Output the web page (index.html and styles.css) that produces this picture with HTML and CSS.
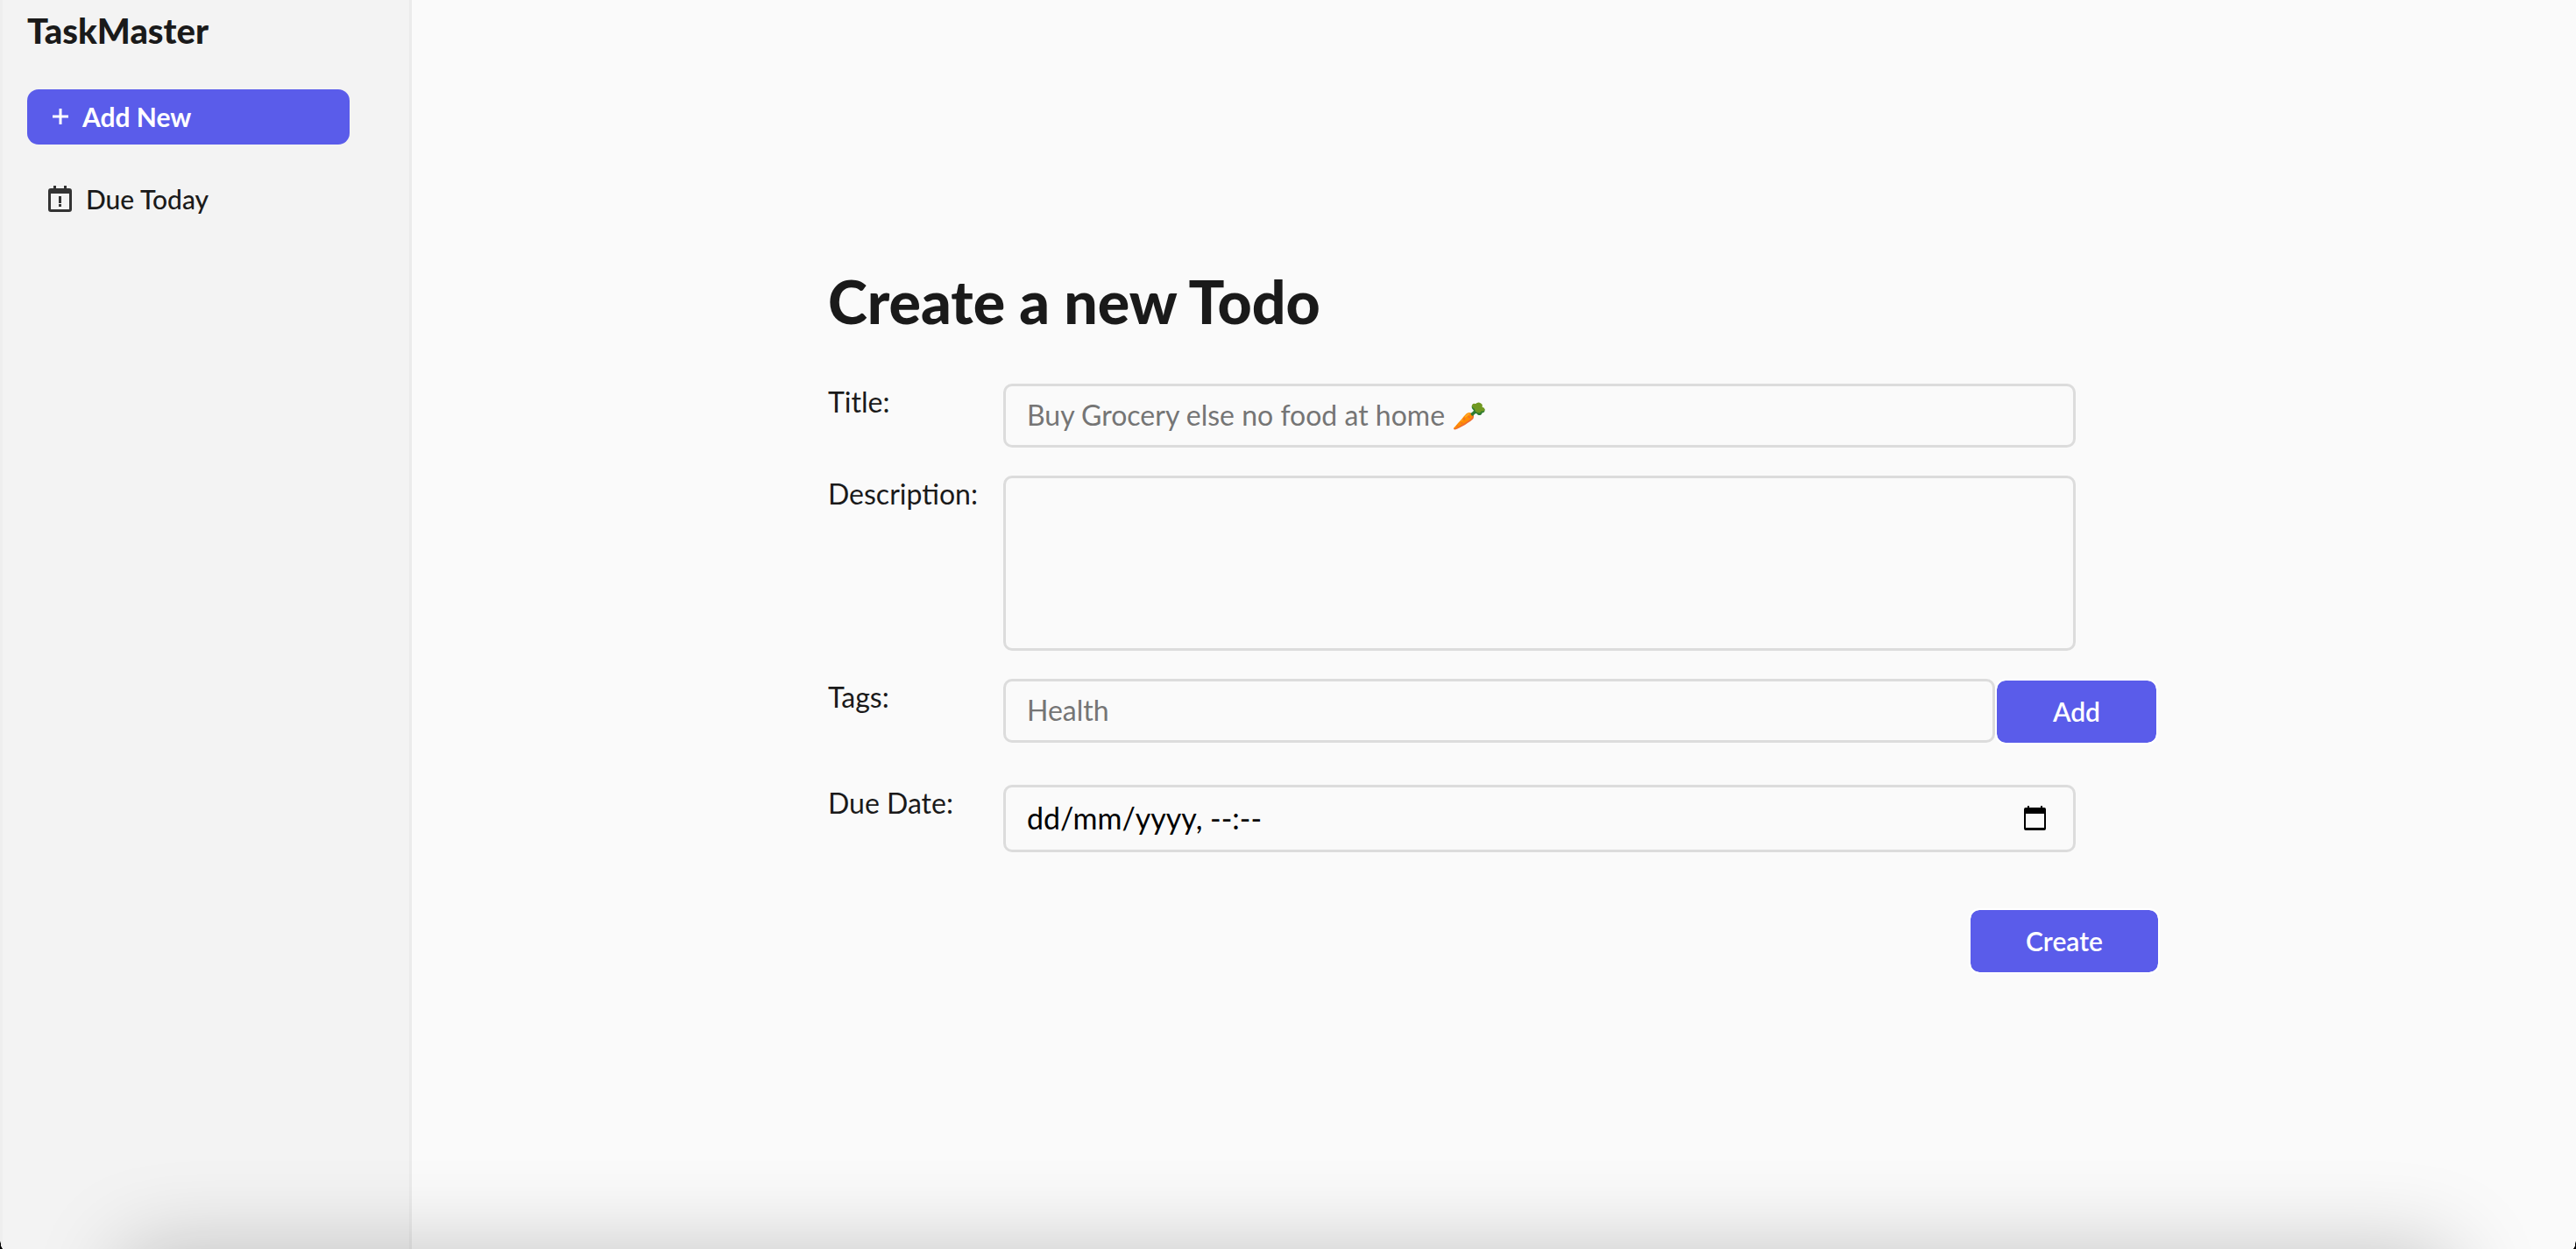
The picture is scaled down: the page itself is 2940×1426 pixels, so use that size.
FILE: index.html
```html
<!DOCTYPE html>
<html lang="en-GB">
<head>
<meta charset="utf-8">
<title>TaskMaster</title>
<link rel="stylesheet" href="styles.css">
</head>
<body>
<div class="app">
  <aside class="sidebar">
    <p class="brand">TaskMaster</p>
    <button class="add-new" type="button">
      <svg class="plus" viewBox="0 0 18 18" aria-hidden="true"><path d="M9 0v18M0 9h18" stroke="currentColor" stroke-width="3"/></svg>
      Add New
    </button>
    <nav>
      <a class="nav-link" href="#today">
        <svg class="nav-icon" viewBox="0 0 27 30" aria-hidden="true">
          <path fill="currentColor" fill-rule="evenodd" d="M6 0h3v3h9V0h3v3h3a3 3 0 0 1 3 3v21a3 3 0 0 1-3 3H3a3 3 0 0 1-3-3V6a3 3 0 0 1 3-3h3zM3 9v18h21V9zM12 12h3v8h-3zM12 21h3v3h-3z"/>
        </svg>
        Due Today
      </a>
    </nav>
  </aside>
  <main class="main">
    <form class="todo-form">
      <h1 class="heading">Create a new Todo</h1>
      <div class="row">
        <label class="label" for="title">Title:</label>
        <div class="field"><input class="input" id="title" type="text" placeholder="Buy Grocery else no food at home 🥕"></div>
      </div>
      <div class="row">
        <label class="label" for="description">Description:</label>
        <div class="field"><textarea class="input textarea" id="description"></textarea></div>
      </div>
      <div class="row row-tags">
        <label class="label" for="tags">Tags:</label>
        <div class="tags"><input class="input" id="tags" type="text" placeholder="Health"><button class="button" type="button">Add</button></div>
      </div>
      <div class="row row-date">
        <label class="label" for="due">Due Date:</label>
        <div class="field">
          <div class="input date">
            <input class="date-input" id="due" type="text" placeholder="dd/mm/yyyy, --:--">
            <button class="picker" type="button" aria-label="Show date picker">
              <svg class="picker-icon" viewBox="0 0 25 28" aria-hidden="true"><path fill="currentColor" fill-rule="evenodd" d="M4 0h2v2h13V0h2v2h2a2 2 0 0 1 2 2v22a2 2 0 0 1-2 2H2a2 2 0 0 1-2-2V4a2 2 0 0 1 2-2h2zM2 9v16h21V9z"/></svg>
            </button>
          </div>
        </div>
      </div>
      <div class="actions"><button class="button button-create" type="submit">Create</button></div>
    </form>
  </main>
</div>
</body>
</html>
```

FILE: styles.css
```css
* {
  box-sizing: border-box;
}

body {
  margin: 0;
  background: #fafafa;
  color: #1a1a1a;
  font-family: Lato, "Noto Sans", sans-serif;
  font-size: 32px;
  line-height: 42px;
}

button,
input,
textarea {
  font: inherit;
}

.app {
  display: flex;
  min-height: 100vh;
}

/* soft shadow rising from the bottom edge of the window */
.app::before {
  content: "";
  position: fixed;
  z-index: 1;
  left: 140px;
  right: 140px;
  top: 100vh;
  height: 200px;
  border-radius: 20px;
  box-shadow: 0 0 100px rgba(0, 0, 0, 0.22);
  pointer-events: none;
}

/* rounded window corners */
.app::after {
  content: "";
  position: fixed;
  z-index: 2;
  inset: auto 0 0;
  height: 14px;
  background:
    radial-gradient(ellipse 100% 100% at 100% 0, transparent 90%, #000) left / 3px 14px no-repeat,
    radial-gradient(ellipse 100% 100% at 0 0, transparent 90%, #000) right / 3px 14px no-repeat;
  pointer-events: none;
}

.sidebar {
  flex: none;
  width: 470px;
  padding: 14px 68px 0 28px;
  border-left: 3px solid #eeeeee;
  border-right: 3px solid #ebebeb;
  background: #f3f3f3;
  font-size: 30px;
  font-weight: 500;
}

.brand {
  margin: 0 0 46px;
  font-size: 40px;
  font-weight: 900;
}

.add-new {
  display: flex;
  align-items: center;
  gap: 16px;
  width: 100%;
  height: 63px;
  padding: 0 29px 2px;
  border: 0;
  border-radius: 13px;
  background: #5a5cea;
  color: #fff;
  font-weight: 700;
}

.plus {
  width: 18px;
  height: 18px;
}

.nav-link {
  display: flex;
  align-items: center;
  gap: 16px;
  margin-top: 41px;
  padding-left: 24px;
  color: inherit;
  text-decoration: none;
}

.nav-icon {
  width: 27px;
  height: 30px;
  color: #333;
}

.main {
  flex: 1;
  display: flex;
  align-items: center;
  justify-content: center;
  padding-bottom: 4px;
}

.todo-form {
  width: 1520px;
  max-width: 100%;
}

.heading {
  margin: 0 0 60px;
  font-size: 68px;
  font-weight: 900;
  line-height: 68px;
}

.row {
  display: grid;
  grid-template-columns: 200px 1fr;
  margin-bottom: 32px;
}

.row-tags {
  margin-bottom: 46px;
}

.row-date {
  margin-bottom: 64px;
}

.field {
  display: flex;
  padding-right: 96px;
}

.input {
  flex: 1;
  min-width: 0;
  height: 73px;
  padding: 0 24px 2px;
  border: 3px solid #dcdcdc;
  border-radius: 10px;
  background: transparent;
  color: inherit;
}

.input::placeholder {
  color: #757575;
}

.textarea {
  height: 200px;
  padding: 14px 24px;
  resize: none;
}

.tags {
  display: flex;
}

.date {
  display: flex;
  align-items: center;
  height: 77px;
  padding-right: 31px;
}

.date-input {
  flex: 1;
  min-width: 0;
  padding: 0;
  border: 0;
  background: none;
  color: #000;
  font-size: 34px;
}

.date-input::placeholder {
  color: #000;
}

.picker {
  display: flex;
  padding: 0;
  border: 0;
  background: none;
  color: #000;
}

.picker-icon {
  width: 25px;
  height: 28px;
}

.button {
  height: 75px;
  width: 186px;
  padding: 0 0 2px;
  margin-right: 2px;
  border: 2px solid #fff;
  border-radius: 12px;
  background: #5a5cea;
  background-clip: padding-box;
  color: #fff;
  font-size: 30px;
  font-weight: 600;
}

.actions {
  display: flex;
  justify-content: flex-end;
}

.button-create {
  width: 218px;
  margin-right: 0;
}
```
